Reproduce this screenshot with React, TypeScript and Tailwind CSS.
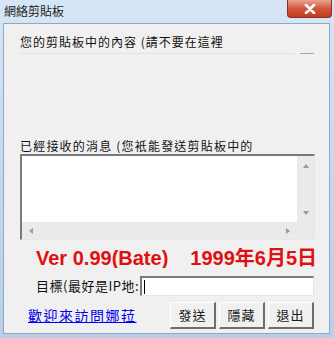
const cjk = { fontFamily: '"Noto Sans CJK TC", "Noto Sans CJK SC", sans-serif' };

function Arrow({ dir }: { dir: "up" | "down" | "left" | "right" }) {
  const pts = {
    up: "1,5 4,1 7,5",
    down: "1,1 4,5 7,1",
    left: "5,1 1,4 5,7",
    right: "1,1 5,4 1,7",
  }[dir];
  const vert = dir === "up" || dir === "down";
  return (
    <svg width={vert ? 8 : 6} height={vert ? 6 : 8} viewBox={vert ? "0 0 8 6" : "0 0 6 8"}>
      <polygon points={pts} fill="#9a9a9a" />
    </svg>
  );
}

function WinButton({ label }: { label: string }) {
  return (
    <button
      className="h-[27px] w-[46px] bg-[#f0f0f0] border-t border-l border-t-white border-l-white border-r-2 border-b-2 border-r-[#6d6d6d] border-b-[#6d6d6d] text-[13px] text-[#1a1a1a] tracking-[1px] flex items-center justify-center"
      style={cjk}
    >
      {label}
    </button>
  );
}

export default function App() {
  return (
    <div className="w-[334px] h-[338px] bg-gradient-to-b from-[#d7e6f5] via-[#c4d8ee] to-[#b9cfe8] flex flex-col overflow-hidden">
      {/* title bar */}
      <div className="h-[23px] flex items-start justify-between">
        <span className="ml-[4px] mt-[4px] text-[12px] leading-[14px] text-[#1e1e1e]" style={cjk}>
          網絡剪貼板
        </span>
        <div className="mr-[2px] w-[45px] h-[18px] rounded-b-[4px] bg-gradient-to-b from-[#e8a493] via-[#d2563c] to-[#c23b1f] border border-[#8a2f22] border-t-0 flex items-center justify-center">
          <svg width="12" height="10" viewBox="0 0 12 10">
            <path d="M2 1 L10 9 M10 1 L2 9" stroke="#ffffff" strokeWidth="2.6" strokeLinecap="round" />
          </svg>
        </div>
      </div>

      {/* client */}
      <div className="flex-1 ml-[3px] mr-[4px] mb-[4px] bg-[#f0f0f0] border border-[#8fa9c4] flex flex-col pl-[16px] pr-[15px]">
        <div className="mt-[10px] h-[16px] text-[12px] leading-[16px] text-[#111] tracking-[1px] whitespace-nowrap" style={cjk}>
          您的剪貼板中的內容 (請不要在這裡
        </div>
        <div className="mt-[3px] flex items-center">
          <div className="h-px w-[275px] bg-[#fdfdfd] border-b border-[#e2e2e2]" />
          <div className="ml-[5px] h-px w-[14px] bg-[#a8a8a8]" />
        </div>

        <div className="mt-[84px] h-[16px] text-[12px] leading-[16px] text-[#111] tracking-[1.2px] whitespace-nowrap" style={cjk}>
          已經接收的消息 (您衹能發送剪貼板中的
        </div>

        {/* received textarea */}
        <div className="w-[295px] h-[86px] border-t-2 border-l-2 border-t-[#7a7a7a] border-l-[#7a7a7a] border-r border-b border-r-[#e6e6e6] border-b-[#e6e6e6] flex flex-col">
          <div className="flex flex-1">
            <div className="flex-1 bg-white" />
            <div className="w-[17px] bg-[#eaeaea] flex flex-col items-center justify-between pt-[7px] pb-[6px]">
              <Arrow dir="up" />
              <Arrow dir="down" />
            </div>
          </div>
          <div className="h-[17px] flex">
            <div className="flex-1 bg-[#eaeaea] flex items-center justify-between px-[6px]">
              <Arrow dir="left" />
              <Arrow dir="right" />
            </div>
            <div className="w-[17px] bg-[#eaeaea]" />
          </div>
        </div>

        {/* version */}
        <div
          className="mt-[8px] ml-[16px] h-[20px] flex text-[20px] leading-[20px] font-bold text-[#e01010] whitespace-nowrap overflow-hidden w-[279px]"
          style={{ fontFamily: '"Liberation Sans", "Noto Sans CJK TC", sans-serif' }}
        >
          <span>Ver 0.99(Bate)</span>
          <span className="ml-[22px]">1999年6月5日</span>
        </div>

        {/* target row */}
        <div className="mt-[8px] flex items-center">
          <span className="ml-[16px] w-[104px] text-[13px] text-[#111] whitespace-nowrap tracking-[0.5px]" style={cjk}>
            目標(最好是IP地:
          </span>
          <div className="w-[175px] h-[20px] bg-white border-t-2 border-l-2 border-t-[#7a7a7a] border-l-[#7a7a7a] border-r border-b border-r-[#e6e6e6] border-b-[#e6e6e6] flex items-center pl-[2px]">
            <div className="w-px h-[14px] bg-black" />
          </div>
        </div>

        {/* bottom row */}
        <div className="mt-[6px] flex items-center">
          <a className="ml-[8px] text-[14px] text-[#0000ee] underline whitespace-nowrap tracking-[1.5px]" style={cjk}>
            歡迎來訪問娜菈
          </a>
          <div className="ml-auto flex gap-[3px]">
            <WinButton label="發送" />
            <WinButton label="隱藏" />
            <WinButton label="退出" />
          </div>
        </div>
      </div>
    </div>
  );
}
